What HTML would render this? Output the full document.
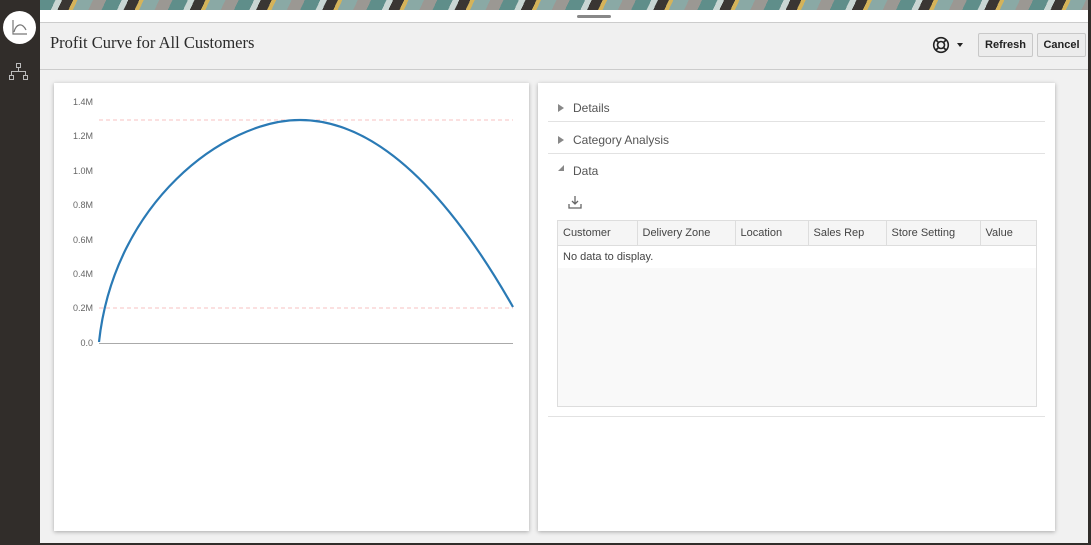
<!DOCTYPE html>
<html><head><meta charset="utf-8"><style>
*{margin:0;padding:0;box-sizing:border-box}
body{width:1091px;height:545px;overflow:hidden;background:#f1f1f1;font-family:"Liberation Sans",sans-serif;position:relative}
.side{position:absolute;left:0;top:0;width:40px;height:545px;background:#312d2a}
.banner{position:absolute;left:40px;top:0;width:1051px;height:10px;background:repeating-linear-gradient(115deg,#5f8e8a 0 14px,#c9d6d3 14px 20px,#3a3633 20px 30px,#d4b35a 30px 34px,#8aa9a5 34px 48px,#9b9893 48px 60px)}
.strip{position:absolute;left:40px;top:10px;width:1051px;height:13px;background:#fff;border-bottom:1px solid #ccc}
.hdr{position:absolute;left:40px;top:23px;width:1051px;height:47px;background:#f0f0f0;border-bottom:1px solid #ccc}
.title{position:absolute;left:10px;top:10px;font-family:"Liberation Serif",serif;font-size:16.5px;color:#2b2b2b}
.btn{position:absolute;top:10px;height:24px;border:1px solid #c8c8c8;border-radius:2px;background:#ececec;font-size:11px;font-weight:bold;color:#222;text-align:center;line-height:22px}
.card{position:absolute;top:83px;height:448px;background:#fff;box-shadow:0 1px 4px rgba(0,0,0,.3)}
.yl{position:absolute;left:18px;font-size:9px;color:#666;width:21px;text-align:right}
.sec{position:absolute;left:10px;width:497px;height:31px;border-bottom:1px solid #e2e2e2;font-size:12px;color:#555}
.sec span{position:absolute;left:25px;top:10px}
.tri{position:absolute;left:10px;top:13px;width:0;height:0;border-left:6px solid #888;border-top:4px solid transparent;border-bottom:4px solid transparent}
table{border-collapse:collapse;font-size:11px;color:#444}
</style></head><body>
<div class="side">
 <div style="position:absolute;left:3px;top:11px;width:33px;height:33px;border-radius:50%;background:#fff"></div>
 <svg style="position:absolute;left:3px;top:11px" width="33" height="33"><path d="M10 9v14h14" stroke="#777" fill="none" stroke-width="1.2"/><path d="M11 21c2-8 8-10 12-2" stroke="#777" fill="none" stroke-width="1.2"/></svg>
 <svg style="position:absolute;left:9px;top:63px" width="20" height="18" fill="none" stroke="#bbb" stroke-width="1"><rect x="7.5" y="0.5" width="4" height="4"/><rect x="0.5" y="12.5" width="4" height="4"/><rect x="14.5" y="12.5" width="4" height="4"/><path d="M9.5 4.5v4M2.5 12.5v-4h14v4"/></svg>
</div>
<div class="banner"></div>
<div class="strip"><div style="position:absolute;left:537px;top:5px;width:34px;height:3px;background:#888;border-radius:2px"></div></div>
<div class="hdr">
 <div class="title">Profit Curve for All Customers</div>
 <svg style="position:absolute;left:892px;top:13px" width="18" height="18" fill="none" stroke="#222" stroke-width="1.6"><circle cx="9" cy="9" r="7.3"/><circle cx="9" cy="9" r="3.5"/><path d="M4 4l2.5 2.5M14 4l-2.5 2.5M4 14l2.5-2.5M14 14l-2.5-2.5"/></svg>
 <div style="position:absolute;left:917px;top:20px;border-top:4px solid #222;border-left:3.5px solid transparent;border-right:3.5px solid transparent"></div>
 <div class="btn" style="left:938px;width:55px">Refresh</div>
 <div class="btn" style="left:997px;width:49px">Cancel</div>
</div>
<div style="position:absolute;right:0;top:0;width:3px;height:545px;background:#312d2a"></div>
<div style="position:absolute;left:40px;bottom:0;width:1051px;height:2px;background:#312d2a"></div>
<div class="card" style="left:54px;width:475px">
 <div class="yl" style="top:14px">1.4M</div><div class="yl" style="top:48px">1.2M</div><div class="yl" style="top:83px">1.0M</div><div class="yl" style="top:117px">0.8M</div><div class="yl" style="top:152px">0.6M</div><div class="yl" style="top:186px">0.4M</div><div class="yl" style="top:220px">0.2M</div><div class="yl" style="top:255px">0.0</div>
 <svg style="position:absolute;left:0;top:0" width="475" height="300">
  <line x1="45" y1="37" x2="459" y2="37" stroke="#f7c0c0" stroke-dasharray="4,3"/>
  <line x1="45" y1="225" x2="459" y2="225" stroke="#f7c0c0" stroke-dasharray="4,3"/>
  <line x1="45" y1="260.5" x2="459" y2="260.5" stroke="#aaa"/>
  <path d="M45 259C60 120 170 37 246 37Q352.5 37 459 224" stroke="#2a7ab5" stroke-width="2.2" fill="none"/>
 </svg>
</div>
<div class="card" style="left:538px;width:517px">
 <div class="sec" style="top:8px"><div class="tri"></div><span>Details</span></div>
 <div class="sec" style="top:40px"><div class="tri"></div><span>Category Analysis</span></div>
 <div class="sec" style="top:71px;height:263px"><div style="position:absolute;left:10px;top:11px;width:0;height:0;border-bottom:6px solid #888;border-left:6px solid transparent"></div><span>Data</span>
  <svg style="position:absolute;left:20px;top:41px" width="14" height="14" fill="none" stroke="#666" stroke-width="1.3"><path d="M7 1v8M4 6l3 3 3-3M1 9v4h12V9"/></svg>
  <div style="position:absolute;left:9px;top:66px;width:480px;height:187px;border:1px solid #ddd;background:#f9f9f9">
   <table style="width:100%;background:#fff">
    <tr style="background:#f5f5f5;height:24px"><td style="border-right:1px solid #ddd;border-bottom:1px solid #ddd;padding-left:5px;width:79px">Customer</td><td style="border-right:1px solid #ddd;border-bottom:1px solid #ddd;padding-left:5px;width:98px">Delivery Zone</td><td style="border-right:1px solid #ddd;border-bottom:1px solid #ddd;padding-left:5px;width:73px">Location</td><td style="border-right:1px solid #ddd;border-bottom:1px solid #ddd;padding-left:5px;width:78px">Sales Rep</td><td style="border-right:1px solid #ddd;border-bottom:1px solid #ddd;padding-left:5px;width:94px">Store Setting</td><td style="border-bottom:1px solid #ddd;padding-left:5px">Value</td></tr>
    <tr style="height:23px"><td colspan="6" style="padding-left:5px">No data to display.</td></tr>
   </table>
  </div>
 </div>
</div>
</body></html>
